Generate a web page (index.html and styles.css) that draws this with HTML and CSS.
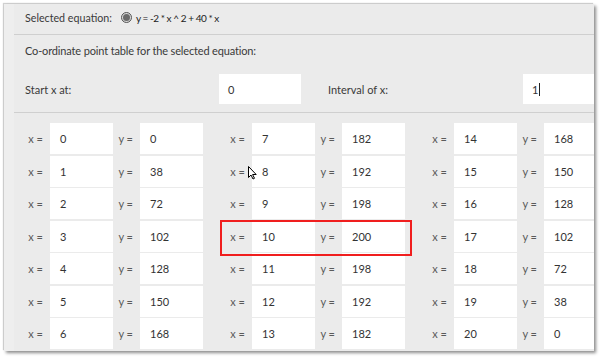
FILE: index.html
```html
<!DOCTYPE html>
<html>
<head>
<meta charset="utf-8">
<link rel="stylesheet" href="styles.css">
</head>
<body>
<div class="frame">
  <div class="inner">
    <div class="eqrow">
      <span class="eqlabel">Selected equation:</span>
      <span class="radio"><span class="dot"></span></span>
      <span class="eq">y = -2 * x ^ 2 + 40 * x</span>
    </div>
    <div class="title">Co-ordinate point table for the selected equation:</div>
    <div class="startrow">
      <span class="slabel">Start x at:</span>
      <div class="field sfield">0</div>
      <span class="slabel ilabel">Interval of x:</span>
      <div class="field sfield">1<span class="caret"></span></div>
    </div>
    <div class="table">
      <div class="group">
        <div class="row"><span class="lbl">x =</span><div class="field">0</div><span class="lbl ylbl">y =</span><div class="field">0</div></div>
        <div class="row"><span class="lbl">x =</span><div class="field">1</div><span class="lbl ylbl">y =</span><div class="field">38</div></div>
        <div class="row"><span class="lbl">x =</span><div class="field">2</div><span class="lbl ylbl">y =</span><div class="field">72</div></div>
        <div class="row"><span class="lbl">x =</span><div class="field">3</div><span class="lbl ylbl">y =</span><div class="field">102</div></div>
        <div class="row"><span class="lbl">x =</span><div class="field">4</div><span class="lbl ylbl">y =</span><div class="field">128</div></div>
        <div class="row"><span class="lbl">x =</span><div class="field">5</div><span class="lbl ylbl">y =</span><div class="field">150</div></div>
        <div class="row"><span class="lbl">x =</span><div class="field">6</div><span class="lbl ylbl">y =</span><div class="field">168</div></div>
      </div>
      <div class="group">
        <div class="row"><span class="lbl">x =</span><div class="field">7</div><span class="lbl ylbl">y =</span><div class="field">182</div></div>
        <div class="row"><span class="lbl">x =</span><div class="field">8</div><span class="lbl ylbl">y =</span><div class="field">192</div></div>
        <div class="row"><span class="lbl">x =</span><div class="field">9</div><span class="lbl ylbl">y =</span><div class="field">198</div></div>
        <div class="row"><span class="lbl">x =</span><div class="field">10</div><span class="lbl ylbl">y =</span><div class="field">200</div></div>
        <div class="row"><span class="lbl">x =</span><div class="field">11</div><span class="lbl ylbl">y =</span><div class="field">198</div></div>
        <div class="row"><span class="lbl">x =</span><div class="field">12</div><span class="lbl ylbl">y =</span><div class="field">192</div></div>
        <div class="row"><span class="lbl">x =</span><div class="field">13</div><span class="lbl ylbl">y =</span><div class="field">182</div></div>
      </div>
      <div class="group">
        <div class="row"><span class="lbl">x =</span><div class="field">14</div><span class="lbl ylbl">y =</span><div class="field">168</div></div>
        <div class="row"><span class="lbl">x =</span><div class="field">15</div><span class="lbl ylbl">y =</span><div class="field">150</div></div>
        <div class="row"><span class="lbl">x =</span><div class="field">16</div><span class="lbl ylbl">y =</span><div class="field">128</div></div>
        <div class="row"><span class="lbl">x =</span><div class="field">17</div><span class="lbl ylbl">y =</span><div class="field">102</div></div>
        <div class="row"><span class="lbl">x =</span><div class="field">18</div><span class="lbl ylbl">y =</span><div class="field">72</div></div>
        <div class="row"><span class="lbl">x =</span><div class="field">19</div><span class="lbl ylbl">y =</span><div class="field">38</div></div>
        <div class="row"><span class="lbl">x =</span><div class="field">20</div><span class="lbl ylbl">y =</span><div class="field">0</div></div>
      </div>
    </div>
  </div>
  <div class="highlight"></div>
  <svg class="cursor" width="10" height="14" viewBox="0 0 10 14">
    <path d="M0.5 0.5 L0.5 11.5 L3 9 L5 13 L6.5 12.3 L4.6 8.5 L8.2 8.5 Z" fill="#fff" stroke="#000" stroke-width="1" stroke-linejoin="round"/>
  </svg>
</div>
</body>
</html>
```

FILE: styles.css
```css
* { box-sizing: border-box; }
html, body { margin: 0; padding: 0; background: #fff; }
body {
  font-family: Lato, "Open Sans", sans-serif;
  font-size: 11px;
  color: #3a3a3a;
  width: 600px;
  height: 358px;
  overflow: hidden;
}
.frame {
  position: relative;
  margin: 4px 0 0 4px;
  width: 590px;
  height: 347px;
  overflow: hidden;
  background: #eeeeee;
  box-shadow: 2px 2px 3px rgba(0,0,0,0.45), -1px -1px 1px rgba(0,0,0,0.18);
}
.inner {
  margin-left: 10px;
  height: 100%;
  background: #ebebeb;
}
.eqrow {
  height: 31px;
  padding: 0 0 3px 11px;
  display: flex;
  align-items: center;
  border-bottom: 1px solid #cfcfcf;
}
.eqlabel { font-size: 10.7px; }
.radio {
  width: 11px;
  height: 11px;
  border-radius: 50%;
  border: 1px solid #555;
  background: #d8d8d8;
  margin: 0 4px 0 9px;
  display: flex;
  align-items: center;
  justify-content: center;
  flex: none;
}
.dot {
  width: 7px;
  height: 7px;
  border-radius: 50%;
  background: #6a6a6a;
}
.eq { font-size: 10px; color: #222; letter-spacing: -0.45px; }
.title {
  padding: 9px 0 0 11px;
  line-height: 14px;
  letter-spacing: -0.15px;
}
.startrow {
  display: flex;
  align-items: center;
  margin-top: 16px;
  padding: 0 0 8px 11px;
  border-bottom: 1px solid #cfcfcf;
  white-space: nowrap;
}
.slabel { width: 194px; flex: none; }
.ilabel { width: 195px; margin-left: 27px; }
.field {
  background: #fff;
  height: 31px;
  display: flex;
  align-items: center;
  padding-left: 10px;
  color: #333;
  flex: none;
}
.sfield { width: 82px; height: 30px; padding-left: 9px; }
.caret {
  display: inline-block;
  width: 1px;
  height: 13px;
  background: #222;
  margin-left: 1px;
}
.table {
  margin-top: 10px;
  display: flex;
  gap: 13px;
}
.group {
  display: flex;
  flex-direction: column;
  gap: 1.5px;
  flex: none;
}
.row {
  display: grid;
  grid-template-columns: 36px 63px 27px 63px;
  height: 31px;
}
.lbl {
  text-align: right;
  padding-right: 7px;
  align-self: center;
  color: #5a5a5a;
}
.highlight {
  position: absolute;
  left: 216px;
  top: 216px;
  width: 192px;
  height: 36px;
  border: 2px solid #f01e1e;
}
.cursor {
  position: absolute;
  left: 244px;
  top: 162px;
}
```
